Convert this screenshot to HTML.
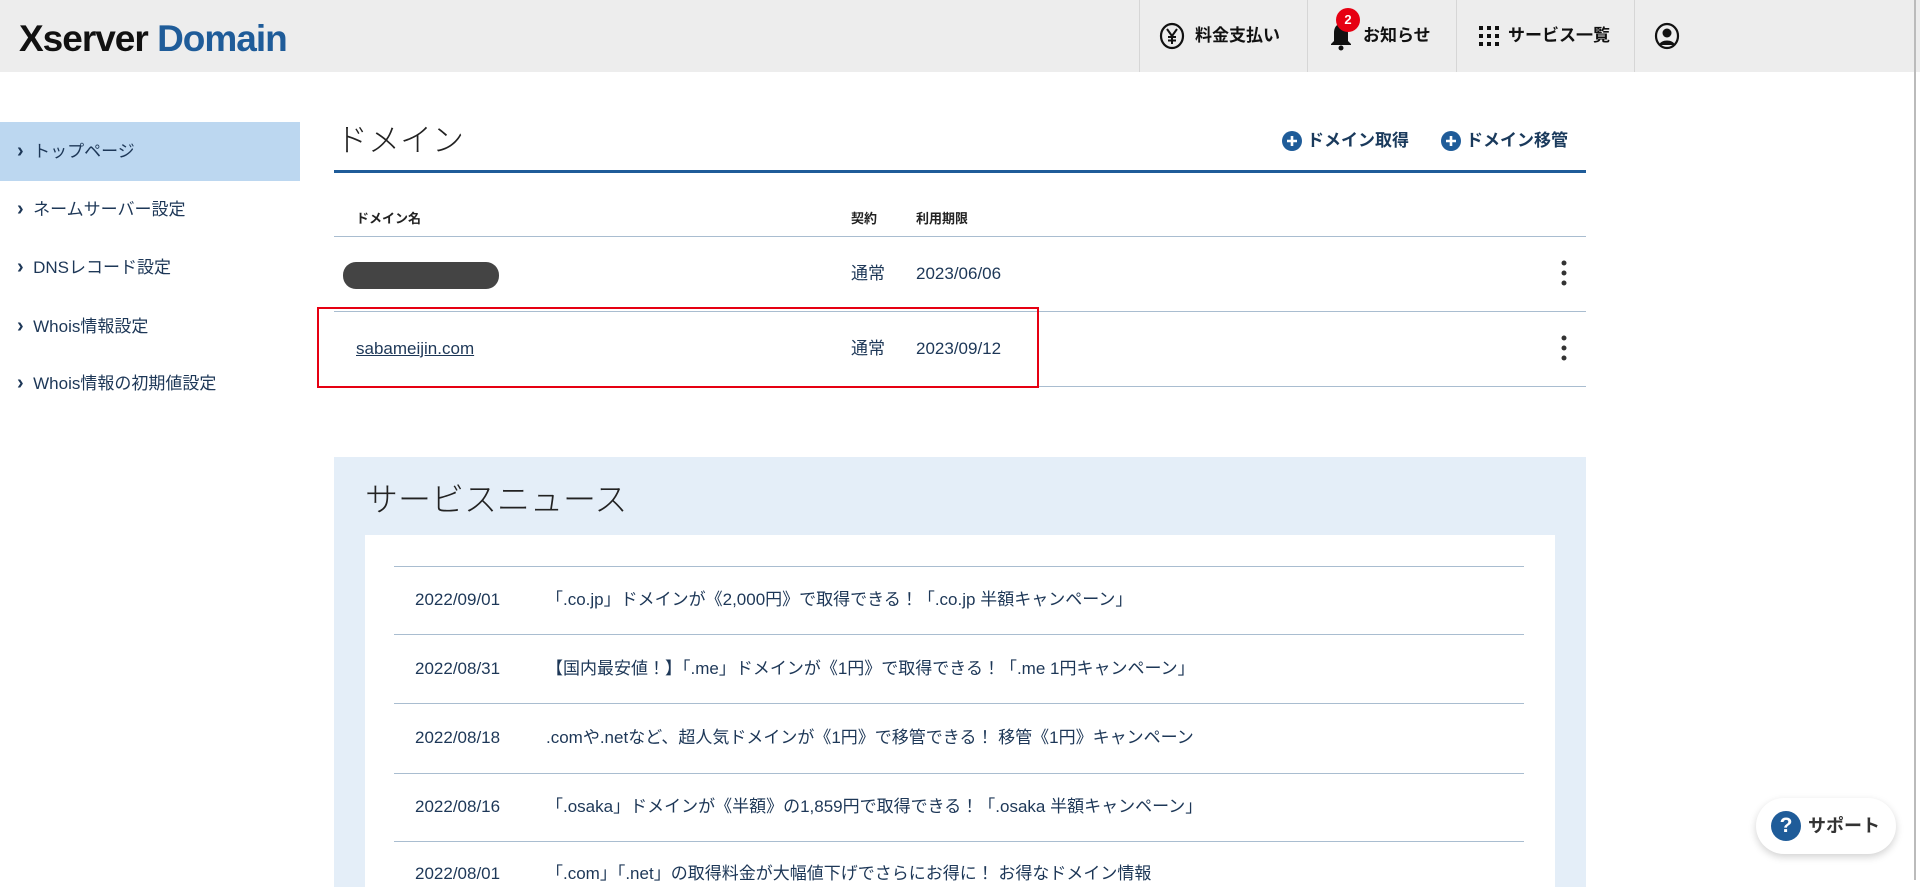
<!DOCTYPE html>
<html><head><meta charset="utf-8">
<style>
*{margin:0;padding:0;box-sizing:border-box}
body{width:1920px;height:880px;overflow:hidden;background:#fff;font-family:"Liberation Sans","Noto Sans CJK JP",sans-serif;color:#1d3757;position:relative}
.a{position:absolute;white-space:nowrap;line-height:24px}
.hdr{position:absolute;left:0;top:0;width:1920px;height:72px;background:#ededed}
.dv{position:absolute;top:0;width:1px;height:72px;background:#d6d6d6}
.ht{font-size:17px;font-weight:bold;color:#111;top:24px}
.side{font-size:17px;color:#1d3757}
.ch{font-size:20px;font-weight:bold}
.hl{position:absolute;height:1px;background:#a9bdd0}
.td{font-size:17px;top:0}
.nl{position:absolute;left:394px;width:1130px;height:1px;background:#a9bdd0}
.nd{font-size:17px;color:#1d3757}
</style></head><body>
<div class="hdr"></div>
<div class="a" style="left:19px;top:18px;font-size:37px;line-height:42px;font-weight:bold;letter-spacing:-1px;color:#111">Xserver <span style="color:#1f5c99">Domain</span></div>
<div class="dv" style="left:1139px"></div><div class="dv" style="left:1307px"></div><div class="dv" style="left:1456px"></div><div class="dv" style="left:1634px"></div>
<div style="position:absolute;left:1914px;top:0;width:2px;height:880px;background:#bbb"></div>
<svg class="a" style="left:1159px;top:22px" width="26" height="28" viewBox="0 0 26 28"><ellipse cx="13" cy="14" rx="11" ry="12" fill="none" stroke="#111" stroke-width="2.2"/><path d="M8 7l5 7 5-7M13 14v8M9 15h8M9 18.5h8" stroke="#111" stroke-width="2" fill="none"/></svg>
<div class="a ht" style="left:1195px">料金支払い</div>
<svg class="a" style="left:1329px;top:22px" width="24" height="30" viewBox="0 0 24 30"><path d="M12 2c-5 0-7 4-7 9v8l-3 3v1h20v-1l-3-3v-8c0-5-2-9-7-9z" fill="#111"/><circle cx="12" cy="26" r="2.5" fill="#111"/></svg>
<div class="a" style="left:1336px;top:8px;width:24px;height:24px;border-radius:12px;background:#e60012;color:#fff;font-size:13px;font-weight:bold;text-align:center;line-height:24px">2</div>
<div class="a ht" style="left:1363px">お知らせ</div>
<svg class="a" style="left:1479px;top:26px" width="20" height="20" viewBox="0 0 20 20" fill="#111"><rect x="0" y="0" width="4" height="4"/><rect x="8" y="0" width="4" height="4"/><rect x="16" y="0" width="4" height="4"/><rect x="0" y="8" width="4" height="4"/><rect x="8" y="8" width="4" height="4"/><rect x="16" y="8" width="4" height="4"/><rect x="0" y="16" width="4" height="4"/><rect x="8" y="16" width="4" height="4"/><rect x="16" y="16" width="4" height="4"/></svg>
<div class="a ht" style="left:1508px">サービス一覧</div>
<svg class="a" style="left:1654px;top:22px" width="26" height="28" viewBox="0 0 26 28"><ellipse cx="13" cy="14" rx="11" ry="12" fill="none" stroke="#111" stroke-width="2.2"/><circle cx="13" cy="11" r="4.5" fill="#111"/><path d="M5 23c2-6 14-6 16 0z" fill="#111"/></svg>

<div class="a" style="left:0;top:122px;width:300px;height:59px;background:#bcd7f0"></div>
<div class="a side" style="left:17px;top:139px"><span class="ch">›</span>&nbsp; トップページ</div>
<div class="a side" style="left:17px;top:197px"><span class="ch">›</span>&nbsp; ネームサーバー設定</div>
<div class="a side" style="left:17px;top:255px"><span class="ch">›</span>&nbsp; DNSレコード設定</div>
<div class="a side" style="left:17px;top:314px"><span class="ch">›</span>&nbsp; Whois情報設定</div>
<div class="a side" style="left:17px;top:371px"><span class="ch">›</span>&nbsp; Whois情報の初期値設定</div>

<div class="a" style="left:336px;top:120px;font-size:32px;line-height:40px;font-weight:300;color:#222">ドメイン</div>
<div class="a" style="left:334px;top:170px;width:1252px;height:3px;background:#1f5c99"></div>
<svg class="a" style="left:1282px;top:131px" width="20" height="20" viewBox="0 0 20 20"><circle cx="10" cy="10" r="10" fill="#1f5c99"/><path d="M10 5v10M5 10h10" stroke="#fff" stroke-width="2.6"/></svg>
<div class="a" style="left:1307px;top:129px;font-size:17px;font-weight:bold;color:#1a3a5c">ドメイン取得</div>
<svg class="a" style="left:1441px;top:131px" width="20" height="20" viewBox="0 0 20 20"><circle cx="10" cy="10" r="10" fill="#1f5c99"/><path d="M10 5v10M5 10h10" stroke="#fff" stroke-width="2.6"/></svg>
<div class="a" style="left:1466px;top:129px;font-size:17px;font-weight:bold;color:#1a3a5c">ドメイン移管</div>

<div class="a" style="left:356px;top:207px;font-size:13px;font-weight:bold;color:#222">ドメイン名</div>
<div class="a" style="left:851px;top:207px;font-size:13px;font-weight:bold;color:#222">契約</div>
<div class="a" style="left:916px;top:207px;font-size:13px;font-weight:bold;color:#222">利用期限</div>
<div class="hl" style="left:334px;top:236px;width:1252px"></div>
<div class="a" style="left:343px;top:262px;width:156px;height:27px;border-radius:13px;background:#444"></div>
<div class="a td" style="left:851px;top:262px">通常</div>
<div class="a td" style="left:916px;top:262px">2023/06/06</div>
<svg class="a" style="left:1559px;top:259px" width="10" height="28" viewBox="0 0 10 28" fill="#333"><circle cx="5" cy="4" r="2.5"/><circle cx="5" cy="14" r="2.5"/><circle cx="5" cy="24" r="2.5"/></svg>
<div class="hl" style="left:334px;top:311px;width:1252px"></div>
<div class="a td" style="left:356px;top:337px;text-decoration:underline">sabameijin.com</div>
<div class="a td" style="left:851px;top:337px">通常</div>
<div class="a td" style="left:916px;top:337px">2023/09/12</div>
<svg class="a" style="left:1559px;top:334px" width="10" height="28" viewBox="0 0 10 28" fill="#333"><circle cx="5" cy="4" r="2.5"/><circle cx="5" cy="14" r="2.5"/><circle cx="5" cy="24" r="2.5"/></svg>
<div class="hl" style="left:334px;top:386px;width:1252px"></div>
<div class="a" style="left:317px;top:307px;width:722px;height:81px;border:2px solid #e60012"></div>

<div class="a" style="left:334px;top:457px;width:1252px;height:430px;background:#e4eef8"></div>
<div class="a" style="left:365px;top:480px;font-size:33px;line-height:40px;font-weight:300;color:#222">サービスニュース</div>
<div class="a" style="left:365px;top:535px;width:1190px;height:360px;background:#fff"></div>
<div class="nl" style="top:566px"></div>
<div class="a nd" style="left:415px;top:588px">2022/09/01</div><div class="a nd" style="left:546px;top:588px">「.co.jp」ドメインが《2,000円》で取得できる！「.co.jp 半額キャンペーン」</div>
<div class="nl" style="top:634px"></div>
<div class="a nd" style="left:415px;top:657px">2022/08/31</div><div class="a nd" style="left:546px;top:657px">【国内最安値！】「.me」ドメインが《1円》で取得できる！「.me 1円キャンペーン」</div>
<div class="nl" style="top:703px"></div>
<div class="a nd" style="left:415px;top:726px">2022/08/18</div><div class="a nd" style="left:546px;top:726px">.comや.netなど、超人気ドメインが《1円》で移管できる！ 移管《1円》キャンペーン</div>
<div class="nl" style="top:773px"></div>
<div class="a nd" style="left:415px;top:795px">2022/08/16</div><div class="a nd" style="left:546px;top:795px">「.osaka」ドメインが《半額》の1,859円で取得できる！「.osaka 半額キャンペーン」</div>
<div class="nl" style="top:841px"></div>
<div class="a nd" style="left:415px;top:862px">2022/08/01</div><div class="a nd" style="left:546px;top:862px">「.com」「.net」の取得料金が大幅値下げでさらにお得に！ お得なドメイン情報</div>

<div class="a" style="left:1756px;top:798px;width:140px;height:56px;border-radius:28px;background:#fff;box-shadow:0 3px 8px rgba(0,0,0,.18)"></div>
<div class="a" style="left:1771px;top:811px;width:30px;height:30px;border-radius:15px;background:#1f5c99;color:#fff;font-weight:bold;font-size:21px;text-align:center;line-height:30px">?</div>
<div class="a" style="left:1808px;top:814px;font-size:18px;font-weight:bold;color:#333">サポート</div>
</body></html>
